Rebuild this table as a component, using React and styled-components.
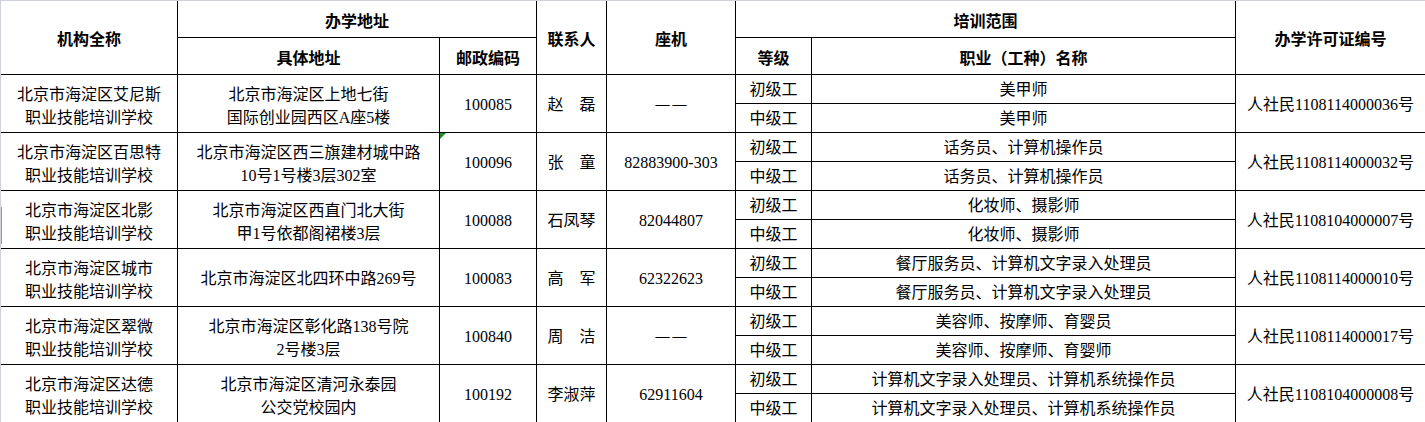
import React from 'react';
import styled, { createGlobalStyle } from 'styled-components';

const GlobalStyle = createGlobalStyle`
  html, body {
    margin: 0;
    padding: 0;
    background: #fff;
  }

  body {
    font-family: "Liberation Serif", "Noto Sans CJK SC", serif;
    color: #000;
    overflow: hidden;
  }
`;

const Sheet = styled.div`
  position: relative;
  width: 1425px;
  height: 422px;
  overflow: hidden;
  box-sizing: border-box;
  border-top: 1px solid #cfd1dc;
  border-left: 1px solid #cfd1dc;
`;

// green marker on the row header edge (selected row)
const RowFlag = styled.span`
  position: absolute;
  left: -1px;
  top: 206px;
  width: 2px;
  height: 37px;
  background: #5bbb93;
`;

const Grid = styled.table`
  width: 1425px;
  table-layout: fixed;
  border-collapse: separate;
  border-spacing: 0;
  font-size: 16px;
`;

const HeadRow = styled.tr`
  height: 37px;
`;

const SubRow = styled.tr`
  height: 29px;
`;

const HeadCell = styled.th`
  box-sizing: border-box;
  padding: 1px 0 0;
  border-right: 1px solid #000;
  border-bottom: 1px solid #000;
  text-align: center;
  vertical-align: middle;
  font-family: "Noto Sans CJK SC", sans-serif;
  font-weight: 700;
  line-height: 20px;
  white-space: nowrap;
`;

const Cell = styled.td`
  position: relative;
  box-sizing: border-box;
  padding: ${props => (props.$lines ? '4px' : '1px')} 0 0;
  border-right: 1px solid #000;
  border-bottom: 1px solid #000;
  text-align: center;
  vertical-align: middle;
  line-height: 23px;
  white-space: nowrap;
`;

const Line = styled.span`
  display: block;
`;

// "no number" placeholder: two short dashes with a gap
const Dash = styled.span`
  font-family: "Liberation Serif", serif;
  font-size: 14px;
  font-weight: 700;
  letter-spacing: 3px;
  margin-right: -3px;
`;

// excel style note triangle in the top-left of a cell
const Note = styled.span`
  position: absolute;
  left: 0;
  top: 0;
  width: 0;
  height: 0;
  border-top: 6px solid #1f8a24;
  border-right: 6px solid transparent;
`;

const columns = [177, 262, 97, 70, 129, 76, 424, 190];

const schools = [
  {
    org: ['北京市海淀区艾尼斯', '职业技能培训学校'],
    addr: ['北京市海淀区上地七街', '国际创业园西区A座5楼'],
    zip: '100085',
    contact: '赵　磊',
    phone: null,
    jobs: ['美甲师', '美甲师'],
    license: '人社民1108114000036号',
  },
  {
    org: ['北京市海淀区百思特', '职业技能培训学校'],
    addr: ['北京市海淀区西三旗建材城中路', '10号1号楼3层302室'],
    zip: '100096',
    contact: '张　童',
    phone: '82883900-303',
    jobs: ['话务员、计算机操作员', '话务员、计算机操作员'],
    license: '人社民1108114000032号',
    note: true,
  },
  {
    org: ['北京市海淀区北影', '职业技能培训学校'],
    addr: ['北京市海淀区西直门北大街', '甲1号依都阁裙楼3层'],
    zip: '100088',
    contact: '石凤琴',
    phone: '82044807',
    jobs: ['化妆师、摄影师', '化妆师、摄影师'],
    license: '人社民1108104000007号',
  },
  {
    org: ['北京市海淀区城市', '职业技能培训学校'],
    addr: ['北京市海淀区北四环中路269号'],
    zip: '100083',
    contact: '高　军',
    phone: '62322623',
    jobs: ['餐厅服务员、计算机文字录入处理员', '餐厅服务员、计算机文字录入处理员'],
    license: '人社民1108114000010号',
  },
  {
    org: ['北京市海淀区翠微', '职业技能培训学校'],
    addr: ['北京市海淀区彰化路138号院', '2号楼3层'],
    zip: '100840',
    contact: '周　洁',
    phone: null,
    jobs: ['美容师、按摩师、育婴员', '美容师、按摩师、育婴师'],
    license: '人社民1108114000017号',
  },
  {
    org: ['北京市海淀区达德', '职业技能培训学校'],
    addr: ['北京市海淀区清河永泰园', '公交党校园内'],
    zip: '100192',
    contact: '李淑萍',
    phone: '62911604',
    jobs: ['计算机文字录入处理员、计算机系统操作员', '计算机文字录入处理员、计算机系统操作员'],
    license: '人社民1108104000008号',
  },
];

const Lines = ({ items }) => items.map(text => <Line key={text}>{text}</Line>);

const School = ({ school }) => (
  <>
    <SubRow>
      <Cell rowSpan={2} $lines>
        <Lines items={school.org} />
      </Cell>
      <Cell rowSpan={2} $lines={school.addr.length > 1}>
        <Lines items={school.addr} />
      </Cell>
      <Cell rowSpan={2}>
        {school.note && <Note />}
        {school.zip}
      </Cell>
      <Cell rowSpan={2}>{school.contact}</Cell>
      <Cell rowSpan={2}>{school.phone || <Dash>——</Dash>}</Cell>
      <Cell>初级工</Cell>
      <Cell>{school.jobs[0]}</Cell>
      <Cell rowSpan={2}>{school.license}</Cell>
    </SubRow>
    <SubRow>
      <Cell>中级工</Cell>
      <Cell>{school.jobs[1]}</Cell>
    </SubRow>
  </>
);

const App = () => {
  return (
    <Sheet>
      <GlobalStyle />
      <RowFlag />
      <Grid>
        <colgroup>
          {columns.map((width, i) => (
            <col key={i} style={{ width }} />
          ))}
        </colgroup>
        <thead>
          <HeadRow>
            <HeadCell rowSpan={2}>机构全称</HeadCell>
            <HeadCell colSpan={2}>办学地址</HeadCell>
            <HeadCell rowSpan={2}>联系人</HeadCell>
            <HeadCell rowSpan={2}>座机</HeadCell>
            <HeadCell colSpan={2}>培训范围</HeadCell>
            <HeadCell rowSpan={2}>办学许可证编号</HeadCell>
          </HeadRow>
          <HeadRow>
            <HeadCell>具体地址</HeadCell>
            <HeadCell>邮政编码</HeadCell>
            <HeadCell>等级</HeadCell>
            <HeadCell>职业（工种）名称</HeadCell>
          </HeadRow>
        </thead>
        <tbody>
          {schools.map(school => (
            <School key={school.zip} school={school} />
          ))}
        </tbody>
      </Grid>
    </Sheet>
  );
};

export default App;
